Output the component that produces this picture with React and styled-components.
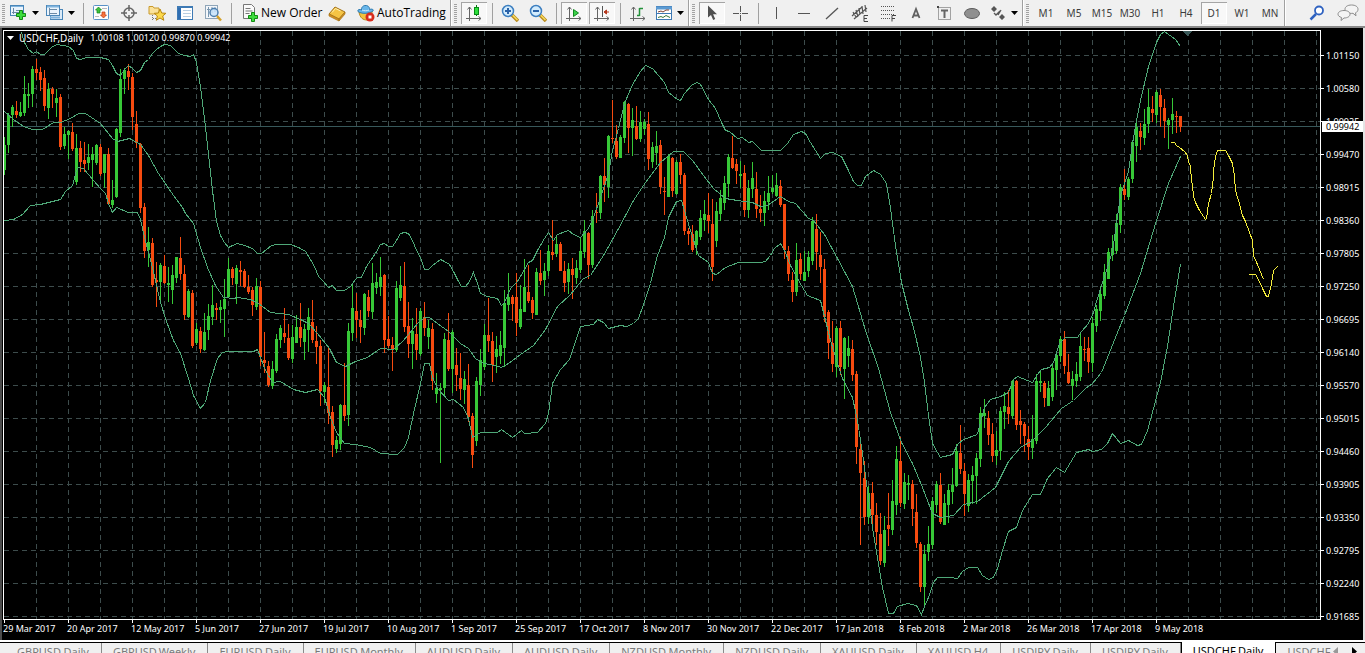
import React from 'react';
import styled, { createGlobalStyle, css } from 'styled-components';

const Global = createGlobalStyle`
  *, *::before, *::after { box-sizing: border-box; }
  body { margin: 0; background: #f0f0f0; font-family: "Noto Sans", "Open Sans", sans-serif; }
`;

/* ---------- candle data ----------
   Each block covers consecutive trading days. A row is
   direction, high, open/close top, open/close bottom, low,
   in thirds of a pixel below the base of its block. */
const candleBlocks = [
  { first: 0, base: 30, rows: `
U 320 345 420 435;U 250 255 345 370;U 225 232 255 290;D 213 243 255 265;U 215 246 257 260;U 138 192 248 258
U 160 192 197 235;U 108 117 193 232;D 88 117 128 150;D 112 126 149 182;D 120 144 228 243;U 158 177 233 266
D 170 177 193 235;U 178 205 218 262;D 192 202 350 360;U 290 312 348 358;U 300 303 316 386;D 280 307 356 362
U 312 354 456 465;D 332 354 395 425;D 335 390 402 425;U 343 380 400 420;U 350 372 390 470;U 343 346 398 405
D 343 352 432 438;U 372 373 430 475;D 355 372 522 525;U 450 510 524 533;U 295 297 500 505;U 118 148 308 320
U 113 120 148 193;D 103 123 142 180;D 128 142 262 300;D 243 282 340 355;D 340 342 533 550;D 520 530 662 684
U 590 636 660 712;D 625 640 764 770;D 697 750 755 830;U 700 706 755 812;D 675 708 760 762;U 712 758 765 815
U 705 734 780 822;U 680 682 743 758;D 622 684 732 750;D 705 732 855 870;U 778 783 860 865;D 780 790 947 955
U 880 898 938 945;D 890 904 958 968;U 850 906 960 962;U 822 858 900 930;U 765 825 862 885;D 820 834 839 870
U 810 832 840 880;U 748 808 838 920;U 685 717 802 805;D 712 717 744 765;U 705 713 762 822` },
  { first: 59, base: 200, rows: `
D 183 210 216 258;D 208 212 262 264;D 225 262 276 282;D 262 270 315 348;U 235 258 320 330;D 243 261 470 497
D 395 480 490 520;D 483 498 555 560;U 483 507 557 567;U 402 417 513 518;U 375 384 420 445;D 325 399 410 428
D 372 414 474 480;U 375 411 477 490;U 345 381 429 430;D 309 381 414 440;U 372 387 426 480;U 324 351 390 456
D 300 366 420 430;D 377 423 440 492;D 420 438 572 618;U 547 556 576 608;D 445 561 640 672;D 618 635 735 770
U 708 720 747 760;U 612 615 732 750;D 490 615 647 662;U 370 393 645 678;U 255 324 399 422;D 280 333 360 415
D 330 360 381 428;U 280 282 384 404;D 270 291 333 350;U 190 249 336 358;U 220 246 264 282;U 172 231 261 288
D 222 225 420 460;D 348 417 437 445;D 410 435 450 513;U 243 264 450 456;U 198 255 294 302;D 186 258 381 396
D 305 378 432 474;U 354 393 432 507;D 325 402 450 480;U 325 333 461 468;D 307 351 384 408;U 360 384 411 447
D 370 387 543 570;U 520 564 582 610;U 550 564 570 788;U 400 417 564 592;D 338 420 507 512;U 390 396 507 578
D 445 495 525 573;D 458 534 567 600;U 512 537 570 612;D 492 555 650 665;D 640 648 765 803;U 532 543 723 738
U 447 480 555 588;U 372 405 501 510` },
  { first: 121, base: 50, rows: `
D 745 855 873 905;D 845 873 945 995;U 858 897 921 968;U 843 885 918 942;U 720 760 893 952;U 670 740 765 782
D 735 740 762 812;D 670 741 818 857;U 705 777 831 838;U 628 711 786 787;D 645 726 754 760;D 742 750 790 806
U 655 666 794 795;D 600 669 693 705;U 640 663 690 738;U 585 603 663 678;D 510 606 614 630;U 562 582 612 620
D 575 582 663 664;D 633 662 698 725;U 640 657 697 732;D 625 657 675 746;U 630 655 685 702;U 560 603 660 670
U 510 543 606 625;D 545 549 645 688;U 480 498 645 655;D 430 485 490 520;U 375 378 489 508;D 325 378 404 456
U 255 258 411 443;D 150 264 268 280;D 225 273 321 328;U 255 261 323 324;U 153 156 264 278;D 160 162 233 310
U 174 210 234 318;D 168 228 267 270;U 183 216 267 275;U 207 216 237 255;D 186 222 327 360;U 275 291 336 355
U 243 288 309 345;D 270 285 411 432;D 380 422 427 495;U 312 318 440 441;D 322 324 423 440;U 330 336 432 436
D 312 336 374 402;D 368 375 543 555;D 535 543 552 584;D 525 552 600 606;U 540 543 585 614;U 480 504 561 570
U 450 492 509 543;D 428 495 513 550;D 447 521 651 692;U 455 483 573 590;U 420 444 492 512;U 378 399 459 480
U 312 321 402 440;D 258 324 354 357;D 327 342 363 402;U 333 372 378 415;D 345 369 480 500;U 390 414 480 505
U 336 384 417 445;D 366 417 476 505;D 435 477 488 515;U 423 453 489 527` },
  { first: 191, base: 120, rows: `
U 168 220 245 270;U 165 204 216 222;U 159 195 228 230;D 180 198 254 260;D 252 253 389 417;D 378 393 461 483
D 457 480 516 545;U 370 420 516 527;D 400 417 461 480;U 393 456 482 483;U 393 411 453 470;U 292 303 423 435
D 282 327 396 450;D 335 405 441 490;D 417 447 592 606;D 570 576 669 717;D 603 669 732 755;U 618 624 740 770
D 603 624 740 765;U 652 654 746 837;U 648 684 708 740;D 660 687 765 782;D 753 762 980 1032;D 957 987 1059 1275
D 1022 1074 1190 1215;U 1098 1119 1190 1212;D 1086 1119 1185 1227;D 1148 1185 1236 1275;D 1178 1242 1323 1335
U 1188 1230 1329 1341;D 1119 1215 1227 1278;U 1080 1143 1230 1245;U 978 1017 1155 1185;D 952 1023 1149 1160
U 1058 1086 1152 1168;U 1065 1089 1095 1140;D 1080 1092 1167 1218;D 1122 1176 1269 1284;D 1267 1272 1400 1415
U 1275 1302 1400 1458;U 1218 1272 1296 1323;U 1130 1143 1275 1287;U 1083 1092 1155 1178;D 1060 1094 1206 1212
U 1122 1149 1214 1215;U 1092 1110 1155 1210` },
  { first: 237, base: 300, rows: `
U 504 555 576 612;U 432 453 558 560;D 375 459 507 522;D 490 513 582 648;U 523 540 618 635;U 498 525 543 612
U 459 474 528 612;U 320 339 477 500;U 297 339 348 384;D 333 354 405 435;D 370 402 468 486;U 393 450 468 494
U 322 333 453 480;U 275 318 336 387;D 270 321 342 372;U 240 243 347 357;D 240 243 375 390;D 330 363 375 432
D 366 372 408 457;D 378 417 441 480;U 345 417 444 477;U 222 243 423 432;U 210 243 249 275;D 244 249 294 320
U 243 264 318 319;U 188 204 291 303;U 160 165 210 270;U 108 117 168 185;D 93 117 198 222;D 162 216 250 252
U 213 237 258 300;U 186 222 243 260;U 95 138 231 242;D 111 146 151 182;D 111 144 186 220;U 50 69 188 215
U 15 27 78 95` },
  { first: 274, base: 28, rows: `
U 775 798 850 880;U 708 732 804 812;U 660 672 752 753;U 620 660 682 700;U 557 585 669 678;U 468 477 591 615
D 423 483 500 515;U 447 453 507 515;U 336 342 453 465;U 273 297 354 402;D 285 309 327 365;U 243 288 330 350
U 183 237 288 315;D 204 243 255 282;U 186 192 261 285;D 183 201 237 297;D 213 240 279 330;U 270 276 291 363
U 210 258 276 318;D 250 264 267 315;D 264 265 297 312` },
];

const candles = candleBlocks.flatMap(({ first, base, rows }) =>
  rows.trim().split(/[;\n]/).map((row, i) => {
    const [dir, ...values] = row.trim().split(' ');
    const [high, top, bottom, low] = values.map((v) => base + Math.round(Number(v) / 3));
    return { x: 4 + 4 * (first + i), up: dir === 'U', high, top, bottom, low };
  })
);

const bands = [
  `21,32 24,42 28,49 33,53 36,51 40,54 44,54 48,50 52,46 57,44 62,45 68,46 73,50 76,58 80,59 86,57 100,57 104,58 108,59 112,65 116,73 120,75 124,69 128,65 132,68 136,72 140,70 144,62 148,59 152,53 156,49 160,46 164,44 170,45 174,49 178,53 184,55 190,56 193,54 196,62 200,86 204,118 208,154 212,190 216,221 220,235 224,242 228,247 232,245 237,243 244,245 252,248 257,253 261,253 266,249 271,245 277,244 290,244 298,247 305,251 310,259 314,266 318,276 322,280 328,287 332,285 336,290 344,290 350,286 355,279 357,277 361,277 366,266 370,260 375,253 380,244 384,243 388,246 392,246 396,240 400,233 404,232 408,233 412,240 416,250 420,257 424,269 428,269 432,265 436,262 440,259 444,261 449,264 453,271 457,279 461,286 465,286 469,281 473,272 477,283 480,293 487,296 497,298 501,305 504,302 510,288 517,281 528,262 532,260 537,250 544,238 548,232 553,240 557,234 568,230 573,234 580,237 588,228 593,217 600,197 608,173 612,150 618,128 624,103 632,84 640,71 645,65 652,68 664,82 668,92 677,99 680,100 684,93 692,84 697,82 700,84 708,99 715,108 721,122 725,130 729,131 737,138 742,137 748,142 752,141 761,150 780,150 787,143 793,134 801,131 805,133 810,142 820,158 825,153 832,152 841,156 848,170 853,181 857,185 861,185 865,176 873,170 880,174 886,183 890,208 895,245 901,282 908,310 913,327 920,357 924,382 928,415 932,443 937,452 940,457 952,454 957,444 963,439 977,434 981,418 984,407 990,399 1000,396 1008,392 1013,379 1017,376 1032,382 1037,374 1041,369 1049,367 1053,362 1059,343 1065,337 1077,337 1081,331 1088,323 1093,312 1096,301 1104,276 1112,251 1116,223 1120,195 1128,171 1132,143 1136,120 1140,100 1148,66 1156,42 1160,34 1164,31 1175,39 1180,46`,
  `4,111 13,119 23,126 32,129 42,129 53,122 60,122 70,118 78,113 85,113 100,123 112,138 117,141 129,138 140,144 148,155 158,173 173,195 182,207 185,213 193,223 200,247 207,267 215,285 223,297 233,298 237,297 250,299 258,303 270,312 288,314 300,319 308,323 317,333 329,348 336,362 345,366 355,361 367,357 380,348 393,349 403,340 418,322 424,317 429,317 437,323 448,331 460,343 468,348 475,358 483,363 490,364 501,367 508,363 520,354 533,345 545,329 557,306 570,294 583,278 590,275 603,255 617,230 633,200 645,182 660,162 673,151 683,151 692,160 703,175 713,188 725,198 737,200 752,202 760,206 767,205 780,196 788,201 795,203 808,218 813,220 824,234 837,258 852,286 865,330 878,368 890,412 901,442 912,463 922,487 932,513 940,517 953,515 963,504 977,501 995,487 1008,461 1020,447 1032,440 1045,427 1061,408 1073,400 1085,388 1092,383 1101,372 1113,342 1124,315 1140,273 1156,220 1168,183 1180,156`,
  `4,220 13,219 22,214 30,205 40,204 60,199 65,191 72,185 76,170 78,167 83,168 93,180 100,188 105,193 108,203 112,212 116,207 128,212 137,212 140,219 144,237 152,267 160,302 165,318 173,340 180,353 188,378 193,395 200,408 205,402 210,380 217,358 222,352 228,351 253,351 257,349 260,357 265,370 272,382 280,381 293,389 305,392 317,389 324,397 330,417 336,432 344,443 355,444 370,447 380,453 397,454 404,447 408,437 413,413 420,383 424,363 429,363 432,377 437,388 448,400 453,399 463,407 468,418 472,437 480,432 497,432 501,429 512,437 521,430 524,433 537,432 545,423 548,413 552,383 560,369 569,359 580,326 593,324 597,319 603,322 608,328 620,325 626,326 633,323 638,318 642,307 650,283 657,255 664,237 668,217 676,201 681,200 684,210 690,230 698,255 708,262 712,273 716,274 725,267 738,262 760,262 765,261 770,255 774,248 780,243 785,252 790,265 798,280 807,295 812,297 820,300 825,320 830,340 837,363 842,378 852,397 857,420 862,453 867,490 872,527 877,557 882,587 888,613 893,613 897,606 907,603 916,605 921,614 924,606 928,597 933,582 937,577 950,577 957,578 962,571 968,567 977,567 982,575 988,579 993,577 997,568 1002,550 1008,531 1016,527 1022,510 1032,494 1040,494 1047,478 1056,467 1064,472 1076,452 1088,449 1092,451 1101,449 1107,443 1112,433 1120,443 1128,440 1137,445 1141,444 1147,430 1153,408 1160,382 1167,346 1173,306 1180,264`,
];

const sketches = [
  '1170,142 1174,142 1176,145 1179,147 1184,151 1187,155 1188,161 1190,166 1191,180 1192,184 1193,196 1195,202 1199,210 1205,219 1206,218 1208,203 1211,193 1213,177 1213,170 1215,156 1217,150 1225,150 1228,155 1232,163 1234,176 1235,190 1238,200 1242,215 1245,221 1252,240 1253,255 1257,264 1263,279',
  '1248,274 1255,274 1258,279 1263,290 1266,296 1268,296 1271,283 1273,270 1277,266',
];

const prices = ['1.01150', '1.00580', '1.00025', '0.99470', '0.98915', '0.98360', '0.97805', '0.97250', '0.96695',
  '0.96140', '0.95570', '0.95015', '0.94460', '0.93905', '0.93350', '0.92795', '0.92240', '0.91685'];
const dates = ['29 Mar 2017', '20 Apr 2017', '12 May 2017', '5 Jun 2017', '27 Jun 2017', '19 Jul 2017', '10 Aug 2017',
  '1 Sep 2017', '25 Sep 2017', '17 Oct 2017', '8 Nov 2017', '30 Nov 2017', '22 Dec 2017', '17 Jan 2018', '8 Feb 2018',
  '2 Mar 2018', '26 Mar 2018', '17 Apr 2018', '9 May 2018'];
const frames = ['M1', 'M5', 'M15', 'M30', 'H1', 'H4', 'D1', 'W1', 'MN'];
const tabs = ['GBPUSD,Daily', 'GBPUSD,Weekly', 'EURUSD,Daily', 'EURUSD,Monthly', 'AUDUSD,Daily', 'AUDUSD,Daily',
  'NZDUSD,Monthly', 'NZDUSD,Daily', 'XAUUSD,Daily', 'XAUUSD,H4', 'USDJPY,Daily', 'USDJPY,Daily', 'USDCHF,Daily', 'USDCHF,H4'];

/* ---------- layout ---------- */
const Terminal = styled.div`
  display: flex;
  flex-direction: column;
  height: 100vh;
  overflow: hidden;
`;

const Toolbar = styled.header`
  display: flex;
  flex: none;
  height: 28px;
  background: #f0f0f0;
  border-bottom: 2px solid #8a8a8a;
`;

const Group = styled.div`
  display: flex;
  align-items: center;
  padding-left: ${(p) => (p.$first ? 7 : 8)}px;
  position: relative;
  border-right: 1px solid #fff;
  box-shadow: inset -1px 0 #a0a0a0;
  padding-right: 1px;
  &::before {
    content: '';
    position: absolute;
    left: 2px;
    top: 4px;
    bottom: 3px;
    width: 3px;
    background: repeating-linear-gradient(#a2a2a2 0 1px, #f0f0f0 1px 2px);
  }
`;

const Separator = styled.span`
  width: 8px;
  height: 21px;
  display: flex;
  justify-content: center;
  &::before { content: ''; width: 1px; background: #a0a0a0; }
`;

const plainButton = css`
  display: flex;
  align-items: center;
  border: 0;
  padding: 0;
  background: none;
  color: #000;
  font: 12px/16px "Open Sans", "Noto Sans", sans-serif;
`;

const ToolButton = styled.button`
  ${plainButton}
  justify-content: center;
  width: 28px;
  height: 24px;
  border: 1px solid transparent;
  background-clip: padding-box;
  ${(p) => p.$pressed && css`
    background-color: #f8f8f8;
    box-shadow: inset 1px 1px #a5a5a5, inset -1px -1px #fff;
  `}
`;

const FrameButton = styled(ToolButton)`
  font: 10px/16px "Noto Sans", sans-serif;
  color: #3c3c3c;
`;

const SplitButton = styled.button`
  ${plainButton}
  width: 36px;
  height: 24px;
  padding-left: 3px;
  gap: 4px;
`;

const LabelButton = styled.button`
  ${plainButton}
  width: ${(p) => p.$width}px;
  height: 24px;
  padding-left: 6px;
  gap: 2px;
  white-space: nowrap;
`;

const Corner = styled.div`
  display: flex;
  align-items: center;
  gap: 3px;
  margin-left: auto;
  padding-right: 3px;
`;

const ChartFrame = styled.main`
  flex: 1;
  min-height: 0;
  display: grid;
  grid-template-columns: 1fr 42px;
  grid-template-rows: 1fr 20px;
  padding: 2px 0 0 1px;
  background: #000;
  border-left: 2px solid #4c4c4c;
  border-right: 2px solid #e4e4e4;
  color: #fff;
  font-size: 9px;
  line-height: 12px;
`;

const Plot = styled.section`
  position: relative;
  border: 1px solid #fff;
  min-height: 0;
  min-width: 0;
`;

const Canvas = styled.svg`
  display: block;
  width: 100%;
  height: 100%;
`;

const Caption = styled.div`
  position: absolute;
  left: 2px;
  top: 1px;
  display: flex;
  align-items: center;
  gap: 4px;
  white-space: nowrap;
`;

const SymbolName = styled.span`
  font-size: 10px;
  margin-right: 3px;
`;

const PriceAxis = styled.div`
  grid-row: 1 / 3;
  grid-column: 2;
  position: relative;
  padding-top: 9px;
`;

const PriceLabel = styled.div`
  display: flex;
  align-items: center;
  height: 33px;
  gap: 2px;
  &::before { content: ''; width: 3px; height: 1px; background: #fff; }
`;

const CurrentPrice = styled.div`
  position: absolute;
  left: 1px;
  right: 0;
  top: 91px;
  height: 11px;
  line-height: 11px;
  padding-left: 4px;
  background: #fff;
  color: #000;
`;

const TimeAxis = styled.div`
  display: flex;
  overflow: hidden;
`;

const TimeLabel = styled.div`
  position: relative;
  flex: none;
  width: 64px;
  padding-top: 3px;
  white-space: nowrap;
  &::before {
    content: '';
    position: absolute;
    left: 1px;
    top: 0;
    width: 1px;
    height: 3px;
    background: #fff;
  }
`;

const TabBar = styled.nav`
  display: flex;
  flex: none;
  height: 13px;
  padding-left: 6px;
  border-top: 2px solid #fff;
  box-shadow: inset 0 1px #000;
  background: #f0f0f0;
  overflow: hidden;
`;

const Tab = styled.button`
  border: 0;
  flex: none;
  margin-top: ${(p) => (p.$active ? 0 : 1)}px;
  padding: 0 12px 0 11px;
  height: 18px;
  font: 11px/${(p) => (p.$active ? 18 : 16)}px "Noto Sans", sans-serif;
  white-space: nowrap;
  color: ${(p) => (p.$active ? '#000' : '#7a7a7a')};
  background: ${(p) => (p.$active ? '#fff' : 'none')};
  border-right: 1px solid ${(p) => (p.$active ? '#000' : '#8a8a8a')};
  ${(p) => p.$active && css`border-left: 1px solid #000;`}
  ${(p) => p.$last && css`flex: 1 1 0; min-width: 0; overflow: hidden; border-right: 0; text-align: left; padding-right: 0;`}
`;

const TabScroll = styled.div`
  display: flex;
  flex: none;
  gap: 10px;
  padding: 4px 6px 0 2px;
  background: #f0f0f0;
  margin-top: 1px;
`;

const ScrollArrow = styled.button`
  ${plainButton}
  width: 8px;
  height: 9px;
`;

/* ---------- icons ---------- */
const Icon = ({ children, size = 18 }) => (
  <svg width={size} height={size} viewBox="0 0 18 18" fill="none" aria-hidden="true">{children}</svg>
);

const Caret = () => (
  <svg width="7" height="4" viewBox="0 0 7 4" aria-hidden="true"><path d="M0 0h7L3.500 4z" fill="#000" /></svg>
);

const Axes = () => (
  <path d="M4.500 3v14M1 14.500h15M2.500 5.500l2-2.500 2 2.500M13.500 12.500l2.500 2-2.500 2" stroke="#666" />
);

const Plus = ({ x, y }) => (
  <path transform={`translate(${x} ${y})`} d="M3.500.5h3v3h3v3h-3v3h-3v-3h-3v-3h3z" fill="#3ddc3d" stroke="#138a13" />
);

const NewChartIcon = () => (
  <Icon>
    <rect x=".5" y="1.500" width="13" height="10" fill="#eaf4fd" stroke="#4a86b8" />
    <path d="M1 2.500h12" stroke="#7fb3dd" />
    <path d="M3.500 4v6M2 8.500h9M6 6.500h4" stroke="#6b8aa6" />
    <Plus x={6} y={6} />
  </Icon>
);
const ProfilesIcon = () => (
  <Icon>
    <rect x="4.500" y="5.500" width="12" height="10" fill="#dcebf8" stroke="#4a86b8" />
    <rect x=".5" y="1.500" width="13" height="10" fill="#eaf4fd" stroke="#4a86b8" />
    <path d="M1 2.500h12M4 13.500h10" stroke="#7fb3dd" strokeWidth="2" />
    <path d="M3 5.500h8M3 9.500h8M3.500 4v7" stroke="#6b8aa6" />
  </Icon>
);
const MarketIcon = () => (
  <Icon>
    <rect x="1.500" y="1.500" width="15" height="14" rx="1" fill="#fdfdfd" stroke="#5a92c8" />
    <path d="M6.500 3l3 3h-1.500v3h-3V6H3.500z" fill="#3cc43c" stroke="#16811b" strokeWidth=".7" />
    <path d="M11.500 14l3-3H13V8h-3v3H8.500z" fill="#f8743c" stroke="#c03a14" strokeWidth=".7" />
    <path d="M10 4.500h5M3 12.500h4" stroke="#bbb" />
  </Icon>
);
const TargetIcon = () => (
  <Icon><circle cx="9" cy="9" r="5" stroke="#666" strokeWidth="1.500" /><path d="M9 1v6M9 11v6M1 9h6M11 9h6" stroke="#666" strokeWidth="1.500" /></Icon>
);
const NavigatorIcon = () => (
  <Icon>
    <path d="M1 2.500h4l1 1.500h5v6H1z" fill="#fbe29a" stroke="#c99a2c" />
    <path d="M4.500 11v6M5 14.500h3" stroke="#777" strokeDasharray="1 1" />
    <path d="M12 5l1.700 4 4.200.3-3.200 2.700 1.100 4.300L12 14l-3.700 2.300 1.100-4.300L6.200 9.300l4.200-.3z" fill="#fcd94c" stroke="#b98812" />
  </Icon>
);
const DataIcon = () => (
  <Icon>
    <rect x="1.500" y="2.500" width="15" height="13" fill="#fff" stroke="#3e7ab4" />
    <path d="M1 3.500h15" stroke="#3e7ab4" /><path d="M3.500 4v11" stroke="#2f6eb2" strokeWidth="3" />
    <path d="M7 6.500h8M7 9.500h8M7 12.500h8" stroke="#b9cfe2" />
  </Icon>
);
const TesterIcon = () => (
  <Icon>
    <rect x="1.500" y="1.500" width="12" height="13" fill="#f3f6fa" stroke="#8fa5b8" />
    <path d="M4.500 3v10M3 5.500h3M8 3v6M11 3v5" stroke="#7895ae" />
    <circle cx="10" cy="8.500" r="4" fill="#c5e2fa" fillOpacity=".8" stroke="#4d7faf" strokeWidth="1.500" /><path d="M13 12l4 4.500" stroke="#d4a12a" strokeWidth="2.500" />
  </Icon>
);
const OrderIcon = () => (
  <Icon>
    <path d="M2.500.5h8l3 3v11h-11z" fill="#fafafa" stroke="#777" />
    <path d="M4.500 4.500h5M4.500 7h7M4.500 9.500h4" stroke="#777" />
    <Plus x={7} y={8} />
  </Icon>
);
const MetaIcon = () => (
  <Icon>
    <path d="M1 10L7 3l10 5-6 7z" fill="#f5c445" stroke="#a5741a" /><path d="M1 10l10 5v2L1 12zM11 15l6-7v2l-6 7z" fill="#d8921f" stroke="#a5741a" strokeWidth=".7" />
    <path d="M4 8.500l3.500-4 5 2.500" stroke="#fff0b0" />
  </Icon>
);
const AutoIcon = () => (
  <Icon>
    <path d="M2 8c1 6 4 8 8 8l5-4V7z" fill="#f3c33e" stroke="#b98a1c" />
    <path d="M4.500 6C4 0 13 0 12.500 5.500 15 4.500 17 5.500 16 7 12 10 4 10 1 7.500 0 5.500 3 5 4.500 6z" fill="#68b6ea" stroke="#2d79af" />
    <path d="M5 6c2 1 5 1 7 0" stroke="#d0ecff" />
    <circle cx="13" cy="13" r="4.500" fill="#d92c1d" /><rect x="11.500" y="11.500" width="3" height="3" fill="#fff" />
  </Icon>
);
const CandleIcon = () => (<Icon><Axes /><path d="M11.500 1v11" stroke="#0a7a14" /><rect x="9.500" y="3.500" width="4" height="7" fill="#2ee03c" stroke="#0a8a18" /></Icon>);
const Lens = ({ plus }) => (
  <Icon>
    <path d="M11 11l6 6" stroke="#b98a1c" strokeWidth="3.500" /><path d="M11.500 11l5 5" stroke="#f8dc60" strokeWidth="1.500" />
    <circle cx="7" cy="7" r="5.500" fill="#d3ecfd" stroke="#3d7fc0" strokeWidth="1.500" />
    <path d={plus ? 'M4 7h6M7 4v6' : 'M4 7h6'} stroke="#2a62a8" strokeWidth="2" />
  </Icon>
);
const ScrollIcon = () => (<Icon><Axes /><path d="M8.500 5.500l5 3.500-5 3.500z" fill="#3bd24a" stroke="#128a20" /></Icon>);
const ShiftIcon = () => (<Icon><Axes /><path d="M9.500 2v11" stroke="#555" /><path d="M16 8h-5M13.500 6L11 8l2.500 2z" fill="#b5371c" stroke="#b5371c" /></Icon>);
const PeriodIcon = () => (<Icon><Axes /><path d="M8 11.500h2.500M10.500 12V4M10.500 4.500H14" stroke="#23913a" strokeWidth="1.500" /></Icon>);
const TemplateIcon = () => (
  <Icon>
    <rect x="1.500" y="2.500" width="15" height="13" fill="#fff" stroke="#3e7ab4" /><path d="M1 4h16" stroke="#5c9bd3" strokeWidth="3" />
    <path d="M2 9.500h14" stroke="#3e7ab4" /><path d="M3 8l3-1 2 1 3-2h3" stroke="#804030" /><path d="M3 13.500l3-1 2 1 3-2 4 2" stroke="#3a7a3a" />
  </Icon>
);
const CursorIcon = () => (<Icon><path d="M5 1.500v12l3-2.500 2.200 5 2-1-2.100-4.700H14z" fill="#505050" /></Icon>);
const CrossIcon = () => (<Icon><path d="M9.500 2v6M9.500 11v6M2 9.500h6M11 9.500h6M9 9.500h1" stroke="#555" /></Icon>);
const VLineIcon = () => (<Icon><path d="M9.500 3v12" stroke="#555" /></Icon>);
const HLineIcon = () => (<Icon><path d="M3 9.500h12" stroke="#555" /></Icon>);
const TrendIcon = () => (<Icon><path d="M3 15L15 4" stroke="#555" strokeWidth="1.300" /></Icon>);
const ChannelIcon = () => (
  <Icon>
    <path d="M1 12L11 3M3 15L16 4M2 8l3 5M5 6l2 7M8 4l1 7M11 2l1 8M14 1l1 7" stroke="#555" strokeWidth="1.200" />
    <path d="M17 11.500h-4v6h4M13 14.500h3" stroke="#444" />
  </Icon>
);
const FibIcon = () => (
  <Icon><path d="M2 2.500h14M2 6.500h14M2 10.500h14M2 14.500h9" stroke="#555" strokeDasharray="1 1" /><path d="M17 11.500h-4v6M13 14.500h3" stroke="#444" /></Icon>
);
const LetterIcon = () => (<Icon><path d="M5.500 14L9 5l3.500 9M7 11.500h4" stroke="#606060" strokeWidth="1.800" /></Icon>);
const TextBoxIcon = () => (
  <Icon><rect x="3.500" y="3.500" width="12" height="12" stroke="#555" strokeDasharray="1 1" /><path d="M6 6.500h7M9.500 6v8" stroke="#666" strokeWidth="2" /><path d="M2 2h2v2H2z" fill="#444" /></Icon>
);
const EllipseIcon = () => (<Icon><ellipse cx="9" cy="9.500" rx="7.500" ry="5" fill="#8f8f8f" stroke="#5c5c5c" /></Icon>);
const ShapesIcon = () => (
  <Icon><path d="M2 5l3-3 3 3-3 3zM10 13l3-3 3 3-3 3z" fill="#555" /><path d="M5 9l2 2 4-4M12 6l-3 5" stroke="#555" strokeWidth="1.300" /></Icon>
);
const SearchIcon = () => (<Icon><path d="M2.500 15.500L8 10" stroke="#2f62c0" strokeWidth="2.500" /><circle cx="11" cy="6.500" r="4" fill="#fff" stroke="#2f62c0" strokeWidth="1.800" /></Icon>);
const ChatIcon = () => (
  <svg width="22" height="18" viewBox="0 0 22 18" fill="#f4f4f4" stroke="#8c8c8c" aria-hidden="true">
    <path d="M14.500 1c4 0 6.500 1.800 6.500 4.200 0 1.800-1 3-2.500 3.600l.5 3-3-2.500c-5 .5-8-1.300-8-4.100C8 2.800 10.500 1 14.500 1z" />
    <path d="M7 6.500c3.500 0 6 1.500 6 3.700 0 2.300-2.500 3.800-6 3.800l-3 2.500.5-3C2.300 12.800 1 11.700 1 10.200c0-2.200 2.500-3.700 6-3.700z" />
  </svg>
);

const Tool = ({ name, icon, pressed }) => (
  <ToolButton type="button" aria-label={name} $pressed={pressed}>{icon}</ToolButton>
);
const Split = ({ name, icon }) => (
  <SplitButton type="button" aria-label={name}>{icon}<Caret /></SplitButton>
);

function PriceChart() {
  const columns = Array.from({ length: 41 }, (_, i) => 36 + i * 32);
  const rows = prices.map((_, i) => 55 + i * 33);
  return (
    <Canvas viewBox="4 31 1316 588" preserveAspectRatio="none" shapeRendering="crispEdges" role="img" aria-label="USDCHF daily candles">
      <g stroke="#3d4c4c" strokeDasharray="5 4">
        {columns.map((x) => <line key={x} x1={x + 0.5} x2={x + 0.5} y1="31" y2="619" />)}
        {rows.map((y) => <line key={y} x1="4" x2="1320" y1={y + 0.5} y2={y + 0.5} />)}
      </g>
      <path d="M4 126.500H1320" stroke="#37585a" />
      {candles.map((c) => (
        <g key={c.x} fill={c.up ? '#37c837' : '#f64b10'}>
          <rect x={c.x} y={c.high} width="1" height={Math.max(1, c.low - c.high)} />
          <rect x={c.x - 1} y={c.top} width="3" height={Math.max(1, c.bottom - c.top)} />
        </g>
      ))}
      <g fill="none" transform="translate(.5 .5)">
        {bands.map((points, i) => <polyline key={i} points={points} stroke="#4fa878" />)}
        {sketches.map((points, i) => <polyline key={i} points={points} stroke="#f4ee3c" />)}
      </g>
      <path d="M1183 31h9l-4.500 5z" fill="#3a5858" />
    </Canvas>
  );
}

export default function App() {
  return (
    <Terminal>
      <Global />
      <Toolbar>
        <Group $first>
          <Split name="New chart" icon={<NewChartIcon />} />
          <Split name="Profiles" icon={<ProfilesIcon />} />
          <Separator />
          <Tool name="Market watch" icon={<MarketIcon />} />
          <Tool name="Data window" icon={<TargetIcon />} />
          <Tool name="Navigator" icon={<NavigatorIcon />} />
          <Tool name="Terminal" icon={<DataIcon />} />
          <Tool name="Strategy tester" icon={<TesterIcon />} />
          <Separator />
          <LabelButton type="button" $width={88}><OrderIcon />New Order</LabelButton>
          <Tool name="MetaEditor" icon={<MetaIcon />} />
          <LabelButton type="button" $width={99}><AutoIcon />AutoTrading</LabelButton>
        </Group>
        <Group>
          <Tool name="Candlesticks" icon={<CandleIcon />} pressed />
          <Separator />
          <Tool name="Zoom in" icon={<Lens plus />} />
          <Tool name="Zoom out" icon={<Lens />} />
          <Separator />
          <Tool name="Auto scroll" icon={<ScrollIcon />} pressed />
          <Tool name="Chart shift" icon={<ShiftIcon />} pressed />
          <Separator />
          <Tool name="Indicators" icon={<PeriodIcon />} />
          <Split name="Templates" icon={<TemplateIcon />} />
        </Group>
        <Group>
          <Tool name="Cursor" icon={<CursorIcon />} pressed />
          <Tool name="Crosshair" icon={<CrossIcon />} />
          <Separator />
          <Tool name="Vertical line" icon={<VLineIcon />} />
          <Tool name="Horizontal line" icon={<HLineIcon />} />
          <Tool name="Trendline" icon={<TrendIcon />} />
          <Tool name="Equidistant channel" icon={<ChannelIcon />} />
          <Tool name="Fibonacci retracement" icon={<FibIcon />} />
          <Tool name="Text" icon={<LetterIcon />} />
          <Tool name="Text label" icon={<TextBoxIcon />} />
          <Tool name="Ellipse" icon={<EllipseIcon />} />
          <Split name="Arrows" icon={<ShapesIcon />} />
        </Group>
        <Group>
          {frames.map((f) => <FrameButton key={f} type="button" $pressed={f === 'D1'}>{f}</FrameButton>)}
        </Group>
        <Corner>
          <Tool name="Search" icon={<SearchIcon />} />
          <Tool name="Messages" icon={<ChatIcon />} />
        </Corner>
      </Toolbar>
      <ChartFrame>
        <Plot>
          <PriceChart />
          <Caption>
            <svg width="9" height="5" viewBox="0 0 9 5" aria-hidden="true"><path d="M1 0h7L4.500 4z" fill="#fff" /></svg>
            <SymbolName>USDCHF,Daily</SymbolName>
            <span>1.00108 1.00120 0.99870 0.99942</span>
          </Caption>
        </Plot>
        <PriceAxis>
          {prices.map((p) => <PriceLabel key={p}>{p}</PriceLabel>)}
          <CurrentPrice>0.99942</CurrentPrice>
        </PriceAxis>
        <TimeAxis>
          {dates.map((d) => <TimeLabel key={d}>{d}</TimeLabel>)}
        </TimeAxis>
      </ChartFrame>
      <TabBar>
        {tabs.map((t, i) => <Tab key={i} type="button" $active={i === 12} $last={i === 13}>{t}</Tab>)}
        <TabScroll>
          <ScrollArrow type="button" aria-label="Previous charts"><svg width="6" height="9" viewBox="0 0 6 9"><path d="M5 0v9L0 4.500z" fill="#999" /></svg></ScrollArrow>
          <ScrollArrow type="button" aria-label="More charts"><svg width="6" height="9" viewBox="0 0 6 9"><path d="M1 0v9l5-4.500z" fill="#000" /></svg></ScrollArrow>
        </TabScroll>
      </TabBar>
    </Terminal>
  );
}
